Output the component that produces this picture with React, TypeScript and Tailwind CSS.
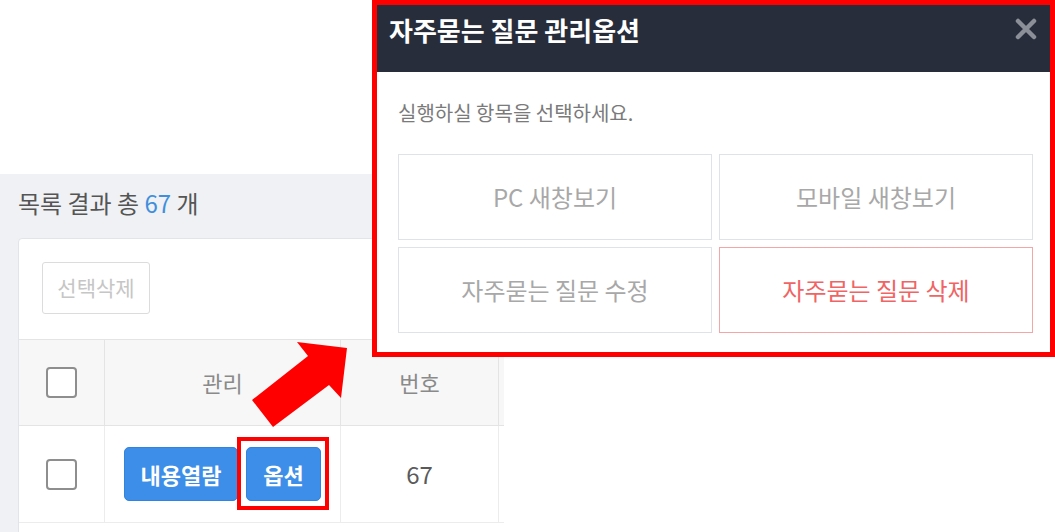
import React from "react";

const font = { fontFamily: '"Noto Sans CJK KR", "Noto Sans", sans-serif' };

function Checkbox() {
  return <div className="w-[31px] h-[31px] rounded-[4px] border-2 border-[#8e8e8e] bg-white" />;
}

export default function App() {
  return (
    <div className="relative w-[1055px] h-[532px] bg-white overflow-hidden" style={font}>
      {/* Left list panel */}
      <div className="mt-[174px] w-[504px] h-[358px] bg-[#eff1f4] pl-[18px] pt-[14px] overflow-hidden">
        <div className="text-[24px] leading-[30px] text-[#555]">
          목록 결과 총 <span className="text-[#3f8fdc]">67</span> 개
        </div>
        <div className="mt-[20px] w-[520px] h-[320px] bg-white border border-[#e1e4e8] rounded-[4px]">
          <div className="h-[100px] pl-[23px] pt-[23px]">
            <div className="w-[108px] h-[52px] border border-[#dcdcdc] rounded-[3px] flex items-center justify-center text-[21px] text-[#c6c6c6]">
              선택삭제
            </div>
          </div>
          {/* header row */}
          <div className="flex h-[87px] bg-[#f7f7f7] border-t border-b border-[#e4e4e4]">
            <div className="w-[85px] flex items-center justify-center">
              <Checkbox />
            </div>
            <div className="w-[236px] border-l border-[#e4e4e4] flex items-center justify-center text-[22px] text-[#8a8a8a]">
              관리
            </div>
            <div className="w-[158px] border-l border-[#e4e4e4] flex items-center justify-center text-[22px] text-[#8a8a8a]">
              번호
            </div>
            <div className="flex-1 border-l border-[#e4e4e4]" />
          </div>
          {/* body row */}
          <div className="flex h-[97px] border-b border-[#ececec]">
            <div className="w-[85px] flex items-center justify-center">
              <Checkbox />
            </div>
            <div className="w-[236px] border-l border-[#ececec] flex items-center justify-center gap-[8px]">
              <div className="w-[114px] h-[54px] rounded-[5px] bg-[#3d8ee8] border border-[#3383dc] flex items-center justify-center text-white font-bold text-[22px]">
                내용열람
              </div>
              <div className="w-[75px] h-[54px] rounded-[5px] bg-[#3d8ee8] border border-[#3383dc] flex items-center justify-center text-white font-bold text-[22px]">
                옵션
              </div>
            </div>
            <div className="w-[158px] border-l border-[#ececec] flex items-center justify-center text-[24px] text-[#5a5a5a]">
              67
            </div>
            <div className="flex-1 border-l border-[#ececec]" />
          </div>
        </div>
      </div>

      {/* highlight box around 옵션 */}
      <div className="absolute left-[237px] top-[437px] w-[92px] h-[73px] border-[4px] border-[#ff0000]" />

      {/* arrow */}
      <svg className="absolute left-[250px] top-[340px]" width="100" height="90" viewBox="0 0 100 90">
        <polygon points="47,2 97,8 91,58 79,45 23,87 2,60 58,16" fill="#ff0000" />
      </svg>

      {/* modal */}
      <div className="absolute left-[372px] top-0 w-[683px] h-[357px] border-[5px] border-[#ff0000] bg-white flex flex-col">
        <div className="h-[67px] bg-[#272d3a] pl-[12px] pr-[13px] pt-[7px] flex items-start justify-between">
          <div className="text-[26px] leading-[36px] font-bold text-white">자주묻는 질문 관리옵션</div>
          <svg className="mt-[6px]" width="22" height="22" viewBox="0 0 22 22">
            <path d="M3 3 L19 19 M19 3 L3 19" stroke="#8b8f97" strokeWidth="4.5" strokeLinecap="round" />
          </svg>
        </div>
        <div className="pl-[21px] pr-[17px] pt-[27px]">
          <div className="text-[20px] leading-[28px] text-[#7a7a7a]">실행하실 항목을 선택하세요.</div>
          <div className="mt-[27px] grid grid-cols-2 gap-[7px]">
            <div className="h-[86px] border border-[#dfe2e6] flex items-center justify-center text-[24px] text-[#a8a8a8]">
              PC 새창보기
            </div>
            <div className="h-[86px] border border-[#dfe2e6] flex items-center justify-center text-[24px] text-[#a8a8a8]">
              모바일 새창보기
            </div>
            <div className="h-[86px] border border-[#dfe2e6] flex items-center justify-center text-[24px] text-[#a8a8a8]">
              자주묻는 질문 수정
            </div>
            <div className="h-[86px] border border-[#f4a5a5] flex items-center justify-center text-[24px] text-[#f06464]">
              자주묻는 질문 삭제
            </div>
          </div>
        </div>
      </div>
    </div>
  );
}
